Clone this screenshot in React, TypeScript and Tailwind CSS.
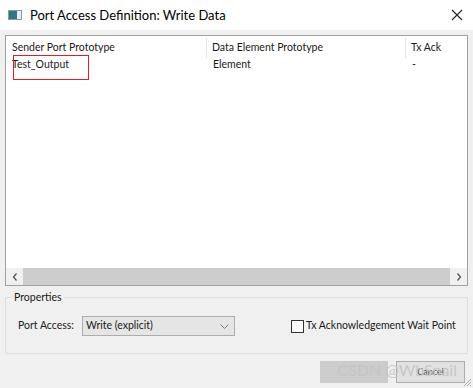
import React from "react";

export default function App() {
  const font = { fontFamily: 'Lato, "Noto Sans", sans-serif' };
  return (
    <div className="w-[473px] h-[388px] bg-[#f0f0f0] flex flex-col overflow-hidden relative text-[#1a1a1a] whitespace-nowrap" style={font}>
      {/* Title bar */}
      <div className="h-[30px] bg-white flex items-center shrink-0">
        <div className="ml-[8px] w-[14px] h-[10px] flex border border-[#8a9aa4]">
          <div className="w-[8px] h-full bg-gradient-to-br from-[#2e7d5b] to-[#3b6ea5]" />
          <div className="flex-1 bg-[#e8eef0]" />
        </div>
        <span className="ml-[8px] text-[13px] text-black leading-none">Port Access Definition: Write Data</span>
        <svg className="ml-auto mr-[10px]" width="12" height="12" viewBox="0 0 12 12">
          <path d="M1 1 L11 11 M11 1 L1 11" stroke="#222" strokeWidth="1.1" />
        </svg>
      </div>

      {/* Table */}
      <div className="mx-[5px] mt-[5px] h-[251px] border border-[#a0a0a0] bg-white flex flex-col pt-[2px]">
        <div className="flex h-[20px] text-[10.5px] items-center">
          <div className="w-[201px] pl-[6px] border-r border-[#e5e5e5] h-full flex items-center">Sender Port Prototype</div>
          <div className="w-[199px] pl-[5px] border-r border-[#e5e5e5] h-full flex items-center">Data Element Prototype</div>
          <div className="pl-[5px] h-full flex items-center">Tx Ack</div>
        </div>
        <div className="flex h-[14px] text-[10.5px] items-center relative">
          <div className="w-[201px] pl-[6px]">Test_Output</div>
          <div className="w-[199px] pl-[6px]">Element</div>
          <div className="pl-[6px]">-</div>
          <div className="absolute left-[7px] top-[-3px] w-[76px] h-[25px] border border-[#e02020]" />
        </div>
        <div className="flex-1" />
        <div className="h-[17px] flex items-center bg-[#f0f0f0]">
          <div className="w-[17px] flex items-center justify-center">
            <svg width="6" height="8" viewBox="0 0 6 8"><path d="M4.5 0.5 L1.5 4 L4.5 7.5" stroke="#555" strokeWidth="1.3" fill="none" /></svg>
          </div>
          <div className="flex-1 h-full bg-[#cdcdcd]" />
          <div className="w-[17px] flex items-center justify-center">
            <svg width="6" height="8" viewBox="0 0 6 8"><path d="M1.5 0.5 L4.5 4 L1.5 7.5" stroke="#555" strokeWidth="1.3" fill="none" /></svg>
          </div>
        </div>
      </div>

      {/* Properties group */}
      <div className="mx-[5px] mt-[11px] h-[57px] border border-[#dcdcdc] rounded-[2px] relative">
        <span className="absolute left-[6px] top-[-6px] bg-[#f0f0f0] px-[2px] text-[10.5px] leading-none">Properties</span>
        <div className="flex items-center mt-[18px] text-[10.5px]">
          <span className="ml-[12px]">Port Access:</span>
          <div className="ml-[8px] w-[153px] h-[20px] border border-[#adadad] bg-[#e5e5e5] flex items-center pl-[3px] shrink-0">
            <span>Write (explicit)</span>
            <svg className="ml-auto mr-[5px]" width="9" height="5" viewBox="0 0 9 5"><path d="M0.5 0.5 L4.5 4.5 L8.5 0.5" stroke="#777" fill="none" /></svg>
          </div>
          <div className="ml-[56px] w-[13px] h-[13px] border border-[#333] bg-white shrink-0" />
          <span className="ml-[2px]">Tx Acknowledgement Wait Point</span>
        </div>
      </div>

      {/* Buttons */}
      <div className="flex justify-end mt-[7px] mr-[8px] gap-[8px] relative">
        <div className="w-[68px] h-[22px] bg-[#cccccc] border border-[#cccccc]" />
        <div className="w-[69px] h-[22px] bg-[#e1e1e1] border border-[#adadad] flex items-center justify-center text-[9px] text-[#444]">Cancel</div>
        <span className="absolute right-[8px] top-[1px] text-[16px] leading-none text-[#c4c4c4]/90 pointer-events-none" style={{ fontFamily: 'Lato, sans-serif' }}>CSDN @WbSnail</span>
      </div>
      <svg className="absolute right-[1px] bottom-[1px]" width="10" height="10" viewBox="0 0 10 10">
        <path d="M9 2 L2 9 M9 5 L5 9 M9 8 L8 9" stroke="#aaa" strokeWidth="1" />
      </svg>
    </div>
  );
}
